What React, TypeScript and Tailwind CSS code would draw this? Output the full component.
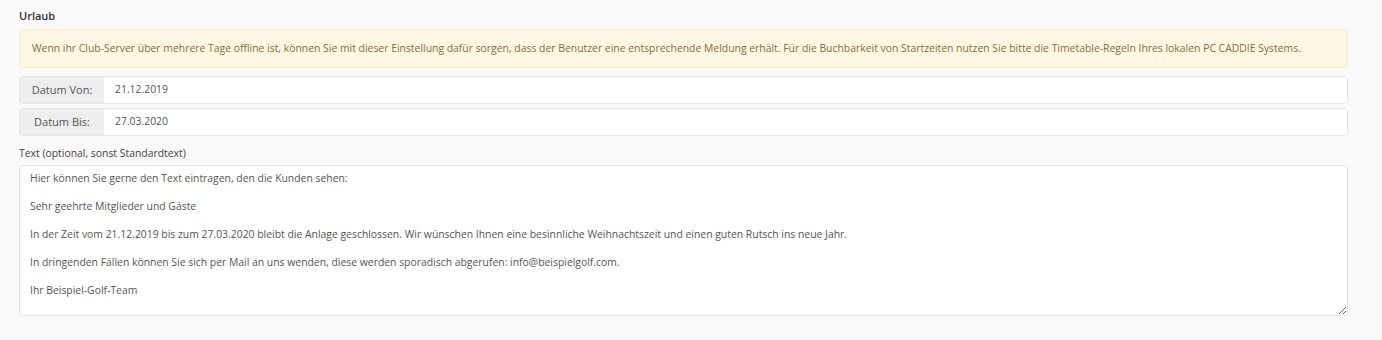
const INFO =
  "Wenn ihr Club-Server über mehrere Tage offline ist, können Sie mit dieser Einstellung dafür sorgen, dass der Benutzer eine entsprechende Meldung erhält. Für die Buchbarkeit von Startzeiten nutzen Sie bitte die Timetable-Regeln Ihres lokalen PC CADDIE Systems.";

const TEXT = [
  "Hier können Sie gerne den Text eintragen, den die Kunden sehen:",
  "",
  "Sehr geehrte Mitglieder und Gäste",
  "",
  "In der Zeit vom 21.12.2019 bis zum 27.03.2020 bleibt die Anlage geschlossen. Wir wünschen Ihnen eine besinnliche Weihnachtszeit und einen guten Rutsch ins neue Jahr.",
  "",
  "In dringenden Fällen können Sie sich per Mail an uns wenden, diese werden sporadisch abgerufen: info@beispielgolf.com.",
  "",
  "Ihr Beispiel-Golf-Team",
].join("\n");

function DatumFeld({ label, wert }: { label: string; wert: string }) {
  return (
    <div className="flex h-[28px] rounded-[3px] border border-[#e6e6e6] bg-white">
      <span className="flex w-[84px] shrink-0 items-center justify-center bg-[#eeeeee] text-[11px] text-[#555555]">
        {label}
      </span>
      <input
        readOnly
        value={wert}
        className="flex-1 bg-white px-[11px] text-[10.4px] text-[#555555] outline-none"
      />
    </div>
  );
}

export default function App() {
  return (
    <div
      className="min-h-[340px] w-full bg-[#fafafa] px-[19px] pt-[9px] text-[#555555]"
      style={{ fontFamily: '"Open Sans", "Liberation Sans", sans-serif' }}
    >
      <div className="mr-[15px]">
        <h3 className="mb-[6px] text-[11px] font-semibold leading-[14px] text-[#333333]">Urlaub</h3>

        <div className="mb-[8px] flex h-[39px] items-center rounded-[3px] border border-[#faebcc] bg-[#fcf8e3] px-[12px] text-[10.4px] text-[#8a6d3b]">
          {INFO}
        </div>

        <div className="flex flex-col gap-[4px]">
          <DatumFeld label="Datum Von:" wert="21.12.2019" />
          <DatumFeld label="Datum Bis:" wert="27.03.2020" />
        </div>

        <label className="mt-[10px] mb-[5px] block text-[10.4px] leading-[14px] text-[#444444]">
          Text (optional, sonst Standardtext)
        </label>
        <textarea
          readOnly
          defaultValue={TEXT}
          className="block h-[151px] w-full resize-y rounded-[3px] border border-[#e6e6e6] bg-white px-[10px] pt-[5px] pb-[6px] text-[10.4px] leading-[14px] text-[#555555] outline-none"
        />
      </div>
    </div>
  );
}
